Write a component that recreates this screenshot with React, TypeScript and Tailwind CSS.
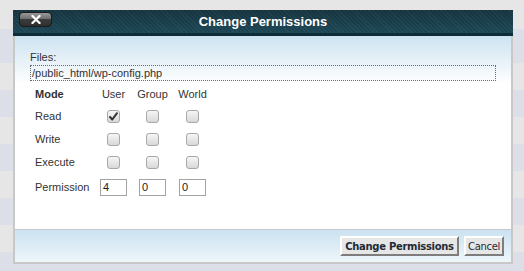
import React from 'react';

const stripes: { h: string; c: string }[] = [
  { h: 'h-[29px]', c: 'bg-[#e6e6e6]' },
  { h: 'h-[34px]', c: 'bg-[#dcdfe8]' },
  { h: 'h-[27px]', c: 'bg-[#e6e6e6]' },
  { h: 'h-[27px]', c: 'bg-[#dcdfe8]' },
  { h: 'h-[27px]', c: 'bg-[#e6e6e6]' },
  { h: 'h-[27px]', c: 'bg-[#dcdfe8]' },
  { h: 'h-[27px]', c: 'bg-[#e6e6e6]' },
  { h: 'h-[27px]', c: 'bg-[#dcdfe8]' },
  { h: 'h-[27px]', c: 'bg-[#e6e6e6]' },
  { h: 'h-[27px]', c: 'bg-[#dcdfe8]' },
];

const modes = [
  { label: 'Read', checked: [true, false, false] },
  { label: 'Write', checked: [false, false, false] },
  { label: 'Execute', checked: [false, false, false] },
];

function Checkbox({ checked }: { checked: boolean }) {
  return (
    <span className="flex h-[13px] w-[13px] items-center justify-center rounded-[3px] border border-[#a8a8a8] bg-linear-to-b from-[#f6f6f6] to-[#d8d8d8]">
      {checked && (
        <svg width="11" height="11" viewBox="0 0 11 11">
          <path d="M2 6 L4.3 8.5 L9 2.2" fill="none" stroke="#333" strokeWidth="2" strokeLinecap="round" strokeLinejoin="round" />
        </svg>
      )}
    </span>
  );
}

export default function App() {
  return (
    <div className="relative h-[271px] w-[524px] overflow-hidden font-['Liberation_Sans',Arial,sans-serif] text-[11px] text-[#333]">
      {/* file list behind the dialog */}
      <div className="flex flex-col">
        {stripes.map((s, i) => (
          <div key={i} className={`${s.h} ${s.c}`} />
        ))}
      </div>

      {/* Dialog */}
      <div className="absolute left-[13px] top-[10px] w-[500px]">
        {/* Header */}
        <div className="relative flex h-[26px] items-center justify-center border-b-[3px] border-b-[#0f2d37] bg-[repeating-linear-gradient(45deg,rgba(255,255,255,0.045)_0px,rgba(255,255,255,0.045)_1px,transparent_1px,transparent_3px),linear-gradient(to_bottom,#15343f,#1c4655)]">
          <button className="absolute left-[6px] top-[2px] flex h-[15px] w-[33px] items-center justify-center rounded-[4px] border border-[#1b1b1b] bg-[linear-gradient(to_bottom,#9a9a9a_0%,#6e6e6e_45%,#3c3c3c_50%,#2f2f2f_100%)]">
            <svg width="10" height="9" viewBox="0 0 10 9">
              <path d="M1.5 1 L8.5 8 M8.5 1 L1.5 8" stroke="#fff" strokeWidth="2.2" strokeLinecap="square" />
            </svg>
          </button>
          <span className="text-[13px] font-bold leading-none text-white">Change Permissions</span>
        </div>

        {/* Body */}
        <div className="h-[193px] border-x-2 border-[#c8c8c8] bg-[linear-gradient(to_bottom,#cde3f1_0px,#ffffff_48px)] px-[15px] pt-[15px]">
          <div className="leading-[13px]">Files:</div>
          <div className="mt-[1px] h-[16px] border border-dotted border-[#6b6b6b] pl-[1px] leading-[14px]">
            /public_html/wp-config.php
          </div>

          <div className="ml-[5px] mt-[2px] grid grid-cols-[65px_39px_40px_27px] grid-rows-[22px_23px_23px_23px_26px] items-center">
            <div className="font-bold">Mode</div>
            {['User', 'Group', 'World'].map((c) => (
              <div key={c} className="w-[27px] whitespace-nowrap text-center">
                <span className="inline-block -mx-[10px]">{c}</span>
              </div>
            ))}

            {modes.map((m) => (
              <React.Fragment key={m.label}>
                <div>{m.label}</div>
                {m.checked.map((c, i) => (
                  <div key={i} className="flex w-[27px] justify-center">
                    <Checkbox checked={c} />
                  </div>
                ))}
              </React.Fragment>
            ))}

            <div className="whitespace-nowrap">Permission</div>
            {['4', '0', '0'].map((v, i) => (
              <div key={i} className="h-[17px] w-[27px] border border-[#a2a2a2] bg-white pl-[2px] leading-[15px] text-[#222]">
                {v}
              </div>
            ))}
          </div>
        </div>

        {/* Footer */}
        <div className="flex h-[35px] items-center justify-end gap-[5px] border-x-2 border-b-2 border-t border-[#c8c8c8] bg-[linear-gradient(to_bottom,#cbe2f1,#eef6fa)] pr-[7px]">
          <button className="flex h-[20px] w-[119px] items-center justify-center border-2 border-b-[#7d7d7d] border-l-white border-r-[#7d7d7d] border-t-white bg-[#e6e6e6] font-['DejaVu_Sans',sans-serif] text-[10px] font-bold tracking-[-0.3px] text-[#1f2a36]">
            Change Permissions
          </button>
          <button className="flex h-[20px] w-[40px] items-center justify-center border-2 border-b-[#7d7d7d] border-l-white border-r-[#7d7d7d] border-t-white bg-[#e6e6e6] font-['DejaVu_Sans',sans-serif] text-[10px] tracking-[-0.3px] text-[#1f2a36]">
            Cancel
          </button>
        </div>
      </div>
    </div>
  );
}
